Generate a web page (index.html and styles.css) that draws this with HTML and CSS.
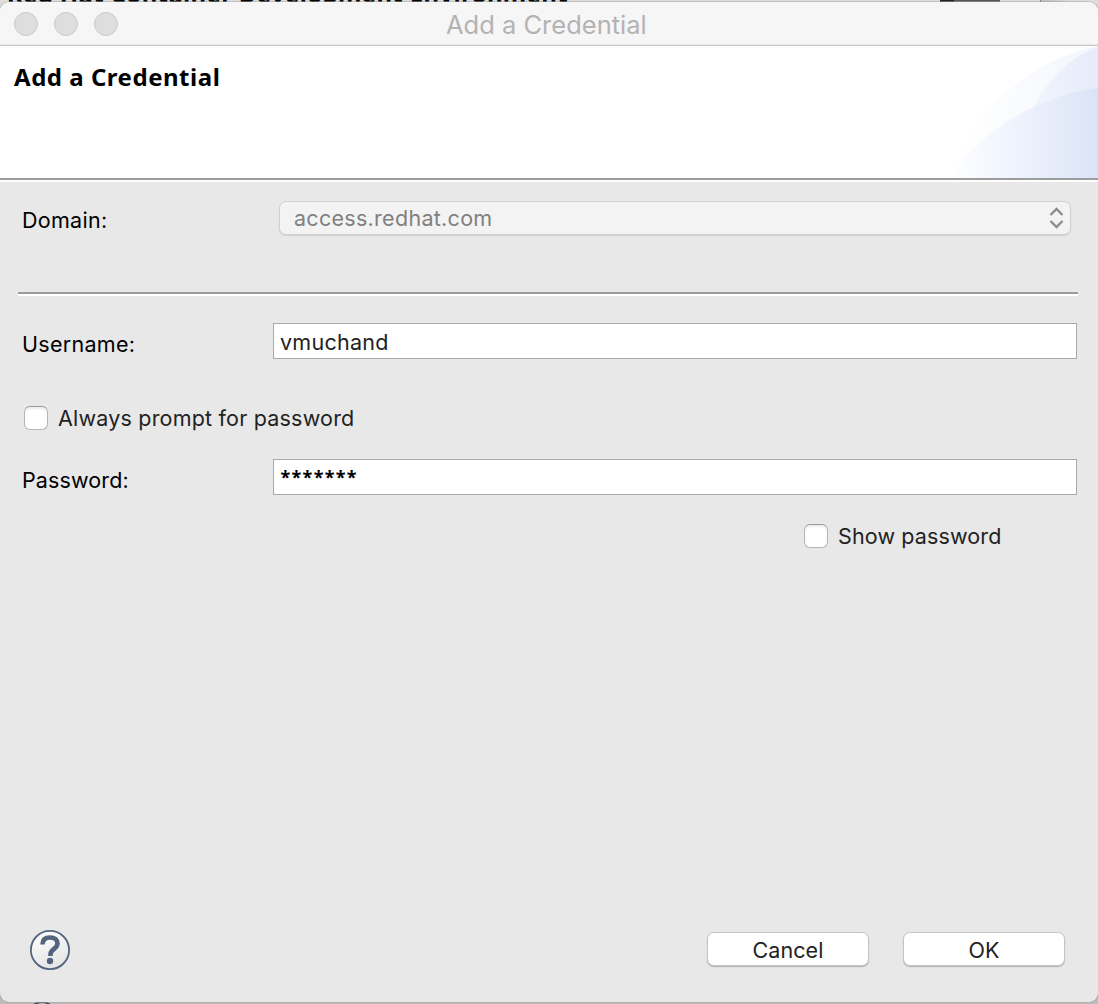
FILE: index.html
```
<!DOCTYPE html>
<html lang="en">
<head>
<meta charset="utf-8">
<title>Add a Credential</title>
<link rel="stylesheet" href="styles.css">
</head>
<body>
<div class="backdrop">
  <span class="backdrop-title">Red Hat Container Development Environment</span>
  <span class="backdrop-tab"></span>
  <span class="backdrop-edge"></span>
  <span class="backdrop-help"></span>
</div>
<main class="window">
  <header class="titlebar">
    <div class="lights"><i class="light"></i><i class="light"></i><i class="light"></i></div>
    <span class="window-title">Add a Credential</span>
  </header>
  <section class="banner">
    <h1 class="heading">Add a Credential</h1>
    <svg class="swoosh" width="158" height="132" viewBox="0 0 158 132">
      <defs>
        <linearGradient id="outer" gradientUnits="userSpaceOnUse" x1="20" y1="0" x2="158" y2="0"><stop offset="0" stop-color="#fff"/><stop offset="1" stop-color="#f3f6fd"/></linearGradient>
        <linearGradient id="middle" gradientUnits="userSpaceOnUse" x1="80" y1="0" x2="158" y2="0"><stop offset="0" stop-color="#f3f6fd"/><stop offset="1" stop-color="#e5ebfa"/></linearGradient>
        <linearGradient id="inner" gradientUnits="userSpaceOnUse" x1="8" y1="0" x2="158" y2="0"><stop offset="0" stop-color="#fff"/><stop offset=".45" stop-color="#eef3fd"/><stop offset="1" stop-color="#dce3f6"/></linearGradient>
      </defs>
      <path fill="url(#outer)" d="M4 132C32 68 88 14 158 0V132Z"/>
      <path fill="url(#middle)" d="M66 132C84 64 112 18 158 1V132Z"/>
      <path fill="url(#inner)" d="M9 132C38 86 98 50 158 42V132Z"/>
    </svg>
  </section>
  <form class="content">
    <div class="row row-domain">
      <span class="label">Domain:</span>
      <div class="select"><span>access.redhat.com</span>
        <svg width="16" height="22" viewBox="0 0 16 22" fill="none" stroke="#8d8d8d" stroke-width="2.4"><path d="M1.500 8l6-6 6 6M1.500 14l6 6 6-6"/></svg>
      </div>
    </div>
    <div class="separator"></div>
    <div class="row row-user">
      <span class="label label-user">Username:</span>
      <div class="field"><span class="value">vmuchand</span></div>
    </div>
    <div class="check check-prompt"><i class="box"></i><span class="prompt-text">Always prompt for password</span></div>
    <div class="row row-pass">
      <span class="label label-pass">Password:</span>
      <div class="field"><span class="stars">*******</span></div>
    </div>
    <div class="check check-show"><i class="box"></i><span class="show-text">Show password</span></div>
    <footer class="footer">
      <svg class="help" width="40" height="40" viewBox="0 0 40 40">
        <defs><linearGradient id="glass" x1="0" y1="0" x2=".4" y2="1"><stop offset="0" stop-color="#fff"/><stop offset="1" stop-color="#e6e6e6"/></linearGradient></defs>
        <circle cx="20" cy="20" r="19.100" fill="url(#glass)" stroke="#53647f" stroke-width="1.800"/>
        <path d="M12.500 14.500C12.500 9.500 15.500 7.500 20 7.500C24.700 7.500 27.500 9.800 27.500 13.500C27.500 18.800 20.500 19 20.500 24.500V26" fill="none" stroke="#53647f" stroke-width="4.600"/>
        <circle cx="20" cy="31" r="3.200" fill="#53647f"/>
      </svg>
      <div class="button">Cancel</div>
      <div class="button">OK</div>
    </footer>
  </form>
</main>
</body>
</html>
```
FILE: styles.css
```
* { box-sizing: border-box; }
body { margin: 0; width: 1098px; height: 1004px; overflow: hidden; position: relative; font-family: Inter, "Liberation Sans", sans-serif; font-size: 21.5px; color: #000; padding-top: 2px; }
.backdrop { position: absolute; inset: 0; overflow: hidden; background: linear-gradient(#dcdcdc 0 900px, #bcbcbc 990px); }
.backdrop-title { position: absolute; left: 7px; top: -21px; font: bold 24px/30px "Noto Sans", sans-serif; letter-spacing: .34px; white-space: nowrap; }
.backdrop-tab { position: absolute; left: 940px; top: 0; width: 60px; height: 4px; background: linear-gradient(90deg, #222 14px, #555 14px); }
.backdrop-edge { position: absolute; left: 1040px; top: 0; width: 58px; height: 8px; border-left: 1px solid #777; background: linear-gradient(90deg, #bbb, #dcdcdc 30px); }
.backdrop-help { position: absolute; left: 28px; top: 1001px; width: 28px; height: 28px; border: 2px solid #444c5c; border-radius: 50%; }
.window { position: relative; height: 1000px; border-radius: 9px; overflow: hidden; background: #e8e8e8; box-shadow: 0 0 0 .5px #a5a5a5; display: flex; flex-direction: column; }
.titlebar { height: 44px; flex: none; background: #f6f6f6; border-bottom: 1px solid #c9c9c9; box-shadow: inset 0 -1px #e9e9e9; display: grid; grid-template-columns: 446px 1fr; }
.lights { display: flex; gap: 16px; padding: 10px 0 0 14px; }
.light { width: 24px; height: 24px; border-radius: 50%; background: #dedede; border: 1px solid #cbcbcb; }
.window-title { font-size: 25.5px; line-height: 46px; color: #b3b3b3; white-space: nowrap; }
.banner { height: 136px; flex: none; display: flex; justify-content: space-between; background: #fff; border-bottom: 2px solid #fff; box-shadow: inset 0 -2px #9c9c9c; }
.heading { margin: 14px 0 0 14px; font: bold 24px/34px "Noto Sans", sans-serif; letter-spacing: .52px; white-space: nowrap; }
.swoosh { display: block; }
.content { flex: 1; display: flex; flex-direction: column; }
.row { display: grid; grid-template-columns: 251px 1fr; padding-left: 22px; }
.row-domain { padding-top: 19px; }
.label { line-height: 38px; white-space: nowrap; letter-spacing: .28px; }
.select { height: 34px; margin: 0 27px 0 6px; padding: 0 5px 0 14px; display: flex; align-items: center; justify-content: space-between; border-radius: 7px; background: #f3f3f3; border: 1px solid #d0d0d0; box-shadow: 0 1px 1px #d2d2d2; color: #808080; letter-spacing: .29px; }
.separator { height: 4px; margin: 53px 20px 0 18px; border-top: 2px solid #9c9c9c; background: #fff; }
.row-user { padding-top: 27px; }
.row-user .label, .row-pass .label { line-height: 42px; }
.label-pass { letter-spacing: .12px; }
.field { height: 36px; margin-right: 21px; padding-left: 6px; line-height: 36px; background: #fff; border: 1px solid #a9a9a9; color: #222; letter-spacing: .25px; }
.stars { display: block; font: bold 18px/35px "Noto Sans", sans-serif; letter-spacing: 1.3px; color: #000; padding-left: .5px; }
.check { display: flex; align-items: center; gap: 10px; color: #222; white-space: nowrap; height: 26px; }
.prompt-text { letter-spacing: .2px; }
.show-text { letter-spacing: .13px; }
.box { width: 24px; height: 24px; border: 1px solid #b5b5b5; border-top-color: #999; border-radius: 6px; background: #fff; box-shadow: inset 0 2px 2px #eee; }
.check-prompt { margin: 40px 0 0 24px; }
.row-pass { margin-top: 28px; }
.check-show { margin: 22px 0 0 804px; }
.footer { display: flex; gap: 34px; margin-top: auto; height: 73px; padding: 3px 33px 0 30px; }
.help { margin: -2px auto 0 0; }
.button { width: 162px; height: 34px; line-height: 34px; text-align: center; color: #222; background: #fff; border: 1px solid #c5c5c5; border-radius: 7px; box-shadow: 0 1px 1px #b0b0b0; letter-spacing: .1px; }
```
